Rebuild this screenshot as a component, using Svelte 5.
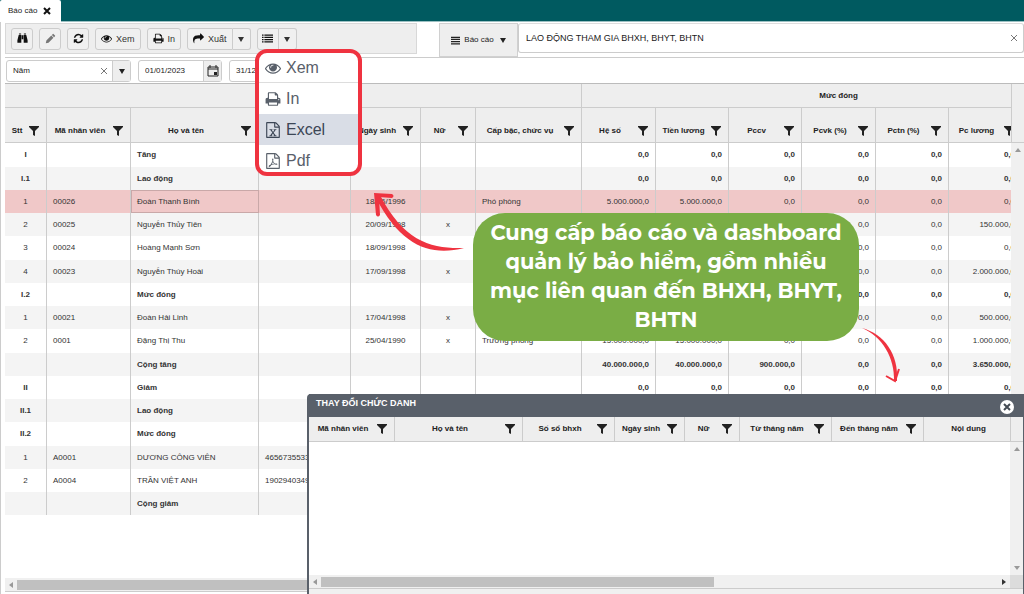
<script lang="ts">
	type Row = { kind?: 'group' | 'selected'; cells: string[] };

	const columns = [
		{ label: 'Stt', width: 42, align: 'center' },
		{ label: 'Mã nhân viên', width: 84, align: 'left' },
		{ label: 'Họ và tên', width: 128, align: 'left' },
		{ label: '', width: 92, align: 'left' },
		{ label: 'Ngày sinh', width: 70, align: 'center' },
		{ label: 'Nữ', width: 55, align: 'center' },
		{ label: 'Cấp bậc, chức vụ', width: 106, align: 'left' },
		{ label: 'Hệ số', width: 74, align: 'right' },
		{ label: 'Tiền lương', width: 73, align: 'right' },
		{ label: 'Pccv', width: 73, align: 'right' },
		{ label: 'Pcvk (%)', width: 74, align: 'right' },
		{ label: 'Pctn (%)', width: 73, align: 'right' },
		{ label: 'Pc lương', width: 73, align: 'right' },
		{ label: '', width: 74, align: 'right' }
	];
	const totalWidth = columns.reduce((sum, c) => sum + c.width, 0);

	const zeros = ['0,0', '0,0', '0,0', '0,0', '0,0', '0,0'];

	const rows: Row[] = [
		{ kind: 'group', cells: ['I', '', 'Tăng', '', '', '', '', ...zeros] },
		{ kind: 'group', cells: ['I.1', '', 'Lao động', '', '', '', '', ...zeros] },
		{ kind: 'selected', cells: ['1', '00026', 'Đoàn Thanh Bình', '', '18/06/1996', '', 'Phó phòng', '5.000.000,0', '5.000.000,0', '0,0', '0,0', '0,0', '0,0'] },
		{ cells: ['2', '00025', 'Nguyễn Thủy Tiên', '', '20/09/1998', 'x', '', '', '', '', '0,0', '0,0', '150.000,0'] },
		{ cells: ['3', '00024', 'Hoàng Mạnh Sơn', '', '18/09/1998', '', '', '', '', '', '0,0', '0,0', '0,0'] },
		{ cells: ['4', '00023', 'Nguyễn Thúy Hoài', '', '17/09/1998', 'x', '', '', '', '', '0,0', '0,0', '2.000.000,0'] },
		{ kind: 'group', cells: ['I.2', '', 'Mức đóng', '', '', '', '', '', '', '', '0,0', '0,0', '0,0'] },
		{ cells: ['1', '00021', 'Đoàn Hải Linh', '', '17/04/1998', 'x', '', '', '', '', '0,0', '0,0', '500.000,0'] },
		{ cells: ['2', '0001', 'Đặng Thị Thu', '', '25/04/1990', 'x', 'Trưởng phòng', '15.000.000,0', '15.000.000,0', '0,0', '0,0', '0,0', '1.000.000,0'] },
		{ kind: 'group', cells: ['', '', 'Cộng tăng', '', '', '', '', '40.000.000,0', '40.000.000,0', '900.000,0', '0,0', '0,0', '3.650.000,0'] },
		{ kind: 'group', cells: ['II', '', 'Giảm', '', '', '', '', ...zeros] },
		{ kind: 'group', cells: ['II.1', '', 'Lao động'] },
		{ kind: 'group', cells: ['II.2', '', 'Mức đóng'] },
		{ cells: ['1', 'A0001', 'DƯƠNG CÔNG VIÊN', '4656735533'] },
		{ cells: ['2', 'A0004', 'TRẦN VIỆT ANH', '1902940349'] },
		{ kind: 'group', cells: ['', '', 'Cộng giảm'] }
	];

	const dialogColumns = [
		{ label: 'Mã nhân viên', width: 86, filter: true },
		{ label: 'Họ và tên', width: 128, filter: true },
		{ label: 'Số sổ bhxh', width: 92, filter: true },
		{ label: 'Ngày sinh', width: 70, filter: true },
		{ label: 'Nữ', width: 55, filter: true },
		{ label: 'Từ tháng năm', width: 92, filter: true },
		{ label: 'Đến tháng năm', width: 92, filter: true },
		{ label: 'Nội dung', width: 90, filter: false }
	];
	const dialogWidth = dialogColumns.reduce((sum, c) => sum + c.width, 0);

	// Icon paths on a 1792 unit grid
	const icons = {
		eye: 'M1664 960q-152-236-381-353 61 104 61 225 0 185-131.5 316.5t-316.5 131.5-316.5-131.5-131.5-316.5q0-121 61-225-229 117-381 353 133 205 333.5 326.5t434.5 121.5 434.5-121.5 333.5-326.5zm-720-384q0-20-14-34t-34-14q-125 0-214.5 89.5t-89.5 214.5q0 20 14 34t34 14 34-14 14-34q0-86 61-147t147-61q20 0 34-14t14-34zm848 384q0 34-20 69-140 230-376.5 368.5t-499.5 138.5-499.5-139-376.5-368q-20-35-20-69t20-69q140-229 376.5-368t499.5-139 499.5 139 376.5 368q20 35 20 69z',
		print: 'M448 1536h896v-256h-896v256zm0-640h896v-384h-160q-40 0-68-28t-28-68v-160h-640v640zm1152 64q0-26-19-45t-45-19-45 19-19 45 19 45 45 19 45-19 19-45zm128 0v416q0 13-9.5 22.5t-22.5 9.5h-224v160q0 40-28 68t-68 28h-960q-40 0-68-28t-28-68v-160h-224q-13 0-22.5-9.5t-9.5-22.5v-416q0-79 56.5-135.5t135.5-56.5h64v-544q0-40 28-68t68-28h672q40 0 88 20t76 48l152 152q28 28 48 76t20 88v256h64q79 0 135.5 56.5t56.5 135.5z',
		file: 'M1596 380q28 28 48 76t20 88v1152q0 40-28 68t-68 28h-1344q-40 0-68-28t-28-68v-1600q0-40 28-68t68-28h896q40 0 88 20t76 48zm-444-244v376h376q-10-29-22-41l-313-313q-12-12-41-22zm384 1528v-1024h-416q-40 0-68-28t-28-68v-416h-768v1536h1280z',
		refresh: 'M1639 1056q0 5-1 7-64 268-268 434.5t-478 166.5q-146 0-282.5-55t-243.5-157l-129 129q-19 19-45 19t-45-19-19-45v-448q0-26 19-45t45-19h448q26 0 45 19t19 45-19 45l-137 137q71 66 161 102t187 36q134 0 250-65t186-179q11-17 53-117 8-23 30-23h192q13 0 22.5 9.5t9.5 22.5zm25-800v448q0 26-19 45t-45 19h-448q-26 0-45-19t-19-45 19-45l138-138q-148-137-349-137-134 0-250 65t-186 179q-11 17-53 117-8 23-30 23h-199q-13 0-22.5-9.5t-9.5-22.5v-7q65-268 270-434.5t480-166.5q146 0 284 55.5t245 156.5l130-129q19-19 45-19t45 19 19 45z',
		share: 'M1792 640q0 26-19 45l-512 512q-19 19-45 19t-45-19-19-45v-256h-224q-98 0-175.5 6t-154 21.5-133 42.5-105.5 69.5-80 101-48.5 138.5-17.5 181q0 55 5 123 0 6 2.5 23.5t2.5 26.5q0 15-8.5 25t-23.5 10q-16 0-28-17-7-9-13-22t-13.5-30-10.5-24q-127-285-127-451 0-199 53-333 162-403 875-403h224v-256q0-26 19-45t45-19 45 19l512 512q19 19 19 45z',
		binoculars: 'M320 64h352v192H320zM1120 64h352v192h-352zM280 320h424v1280H64v-420zM1088 320h424l216 860v420h-640zM768 384h256v640H768z',
		pencil: 'M128 1664l96-448 800-800 352 352-800 800zM1120 320l160-160q48-48 96 0l256 256q48 48 0 96l-160 160z',
		list: 'M0 224h256v224H0zM384 224h1408v224H384zM0 592h256v224H0zM384 592h1408v224H384zM0 960h256v224H0zM384 960h1408v224H384zM0 1328h256v224H0zM384 1328h1408v224H384z',
		bars: 'M0 128h1792v256H0zM0 560h1792v256H0zM0 992h1792v256H0zM0 1424h1792v256H0z',
		excel: 'M500 800h330v90h-70l140 225 140-225h-75v-90h310v90h-80l-225 300 240 320h85v90H950v-90h85l-145-235-145 235h80v90H480v-90h90l245-330-225-290h-90z',
		pdf: 'M430 1540c-60-60 40-170 210-240 110-180 170-330 190-420-60-170-40-260 40-260 90 0 90 130 40 270 50 140 120 230 210 300 160-20 290 10 280 80-10 80-150 70-300-10-130 20-270 50-380 90-120 170-220 260-290 190zm460-540c-40 100-80 180-130 260 90-30 170-50 260-65-60-55-100-120-130-195z'
	};
	type IconName = keyof typeof icons;

	const menuItems: { label: string; icon: IconName[]; active?: boolean }[] = [
		{ label: 'Xem', icon: ['eye'] },
		{ label: 'In', icon: ['print'] },
		{ label: 'Excel', icon: ['file', 'excel'], active: true },
		{ label: 'Pdf', icon: ['file', 'pdf'] }
	];

	let period = $state('Năm');
	let fromDate = $state('01/01/2023');
	let toDate = $state('31/12/2023');
	let reportName = $state('LAO ĐỘNG THAM GIA BHXH, BHYT, BHTN');
</script>

{#snippet icon(names: IconName[])}
	<svg class="icon" viewBox="0 0 1792 1792" aria-hidden="true">
		{#each names as name}<path d={icons[name]} />{/each}
	</svg>
{/snippet}

{#snippet caret()}
	<svg class="caret" viewBox="0 0 6 6" aria-hidden="true"><path d="M0 1h6l-3 5z" /></svg>
{/snippet}

{#snippet funnel()}
	<svg class="funnel" viewBox="0 0 10 10" aria-hidden="true"><path d="M0 0h10v1L6 5v5L4 9V5L0 1z" /></svg>
{/snippet}

{#snippet cross()}
	<svg class="cross" viewBox="0 0 8 8" aria-hidden="true"><path d="M1 1l6 6M7 1l-6 6" /></svg>
{/snippet}

{#snippet calendar()}
	<svg class="calendar" viewBox="0 0 12 12" aria-hidden="true">
		<path d="M1 2h10v9H1zM1 4h10M3 0v3M9 0v3" />
		<rect x="7" y="7" width="3" height="3" />
	</svg>
{/snippet}

<div class="app">
	<header class="tabs">
		<div class="tab">
			<span>Báo cáo</span>
			<button class="bare strong" aria-label="Đóng">{@render cross()}</button>
		</div>
	</header>

	<div class="page">
		<div class="top">
			<div class="toolbar">
				<button class="btn square" aria-label="Tìm">{@render icon(['binoculars'])}</button>
				<button class="btn square muted" aria-label="Sửa">{@render icon(['pencil'])}</button>
				<button class="btn square" aria-label="Nạp lại">{@render icon(['refresh'])}</button>
				<button class="btn">{@render icon(['eye'])}Xem</button>
				<button class="btn">{@render icon(['print'])}In</button>
				<div class="split">
					<button class="btn">{@render icon(['share'])}Xuất</button>
					<button class="btn drop" aria-label="Mở xuất">{@render caret()}</button>
				</div>
				<div class="split">
					<button class="btn square" aria-label="Danh sách">{@render icon(['list'])}</button>
					<button class="btn drop" aria-label="Mở danh sách">{@render caret()}</button>
				</div>
			</div>
			<button class="report">{@render icon(['bars'])}Báo cáo{@render caret()}</button>
			<div class="search">
				<input aria-label="Tên báo cáo" bind:value={reportName} />
				<button class="bare" aria-label="Xóa tên" onclick={() => (reportName = '')}>{@render cross()}</button>
			</div>
		</div>

		<div class="filters">
			<div class="field period">
				<input aria-label="Kỳ" bind:value={period} />
				<button class="bare" aria-label="Xóa kỳ" onclick={() => (period = '')}>{@render cross()}</button>
				<button class="addon" aria-label="Chọn kỳ">{@render caret()}</button>
			</div>
			<div class="field date">
				<input aria-label="Từ ngày" bind:value={fromDate} />
				<button class="addon" aria-label="Chọn từ ngày">{@render calendar()}</button>
			</div>
			<div class="field date">
				<input aria-label="Đến ngày" bind:value={toDate} />
				<button class="addon" aria-label="Chọn đến ngày">{@render calendar()}</button>
			</div>
		</div>

		<div class="grid">
			<div class="viewport">
				<table style="width: {totalWidth}px">
					<colgroup>
						{#each columns as column}<col style="width: {column.width}px" />{/each}
					</colgroup>
					<thead>
						<tr class="bands">
							<th colspan="7"></th>
							<th colspan="7">Mức đóng</th>
						</tr>
						<tr class="heads">
							{#each columns as column}
								<th><div class="head"><span>{column.label}</span>{@render funnel()}</div></th>
							{/each}
						</tr>
					</thead>
					<tbody>
						{#each rows as row}
							<tr class={row.kind}>
								{#each columns as column, i}
									<td class={column.align}>{row.cells[i] ?? ''}</td>
								{/each}
							</tr>
						{/each}
					</tbody>
				</table>
			</div>
			<div class="side">
				<div class="side-head"></div>
				<div class="vtrack"><svg viewBox="0 0 6 4" aria-hidden="true"><path d="M0 4l3-4 3 4z" /></svg></div>
			</div>
			<div class="htrack">
				<svg viewBox="0 0 4 6" aria-hidden="true"><path d="M4 0L0 3l4 3z" /></svg>
				<div class="thumb wide"></div>
			</div>
		</div>
	</div>

	<section class="dialog" aria-label="THAY ĐỔI CHỨC DANH">
		<header>
			<h2>THAY ĐỔI CHỨC DANH</h2>
			<button class="close" aria-label="Đóng cửa sổ">{@render cross()}</button>
		</header>
		<div class="grid">
			<div class="viewport">
				<table style="width: {dialogWidth}px">
					<colgroup>
						{#each dialogColumns as column}<col style="width: {column.width}px" />{/each}
					</colgroup>
					<thead>
						<tr>
							{#each dialogColumns as column}
								<th>
									<div class="head" class:plain={!column.filter}>
										<span>{column.label}</span>{#if column.filter}{@render funnel()}{/if}
									</div>
								</th>
							{/each}
						</tr>
					</thead>
				</table>
			</div>
			<div class="side">
				<div class="side-head"></div>
				<div class="vtrack">
					<svg viewBox="0 0 6 4" aria-hidden="true"><path d="M0 4l3-4 3 4z" /></svg>
					<svg viewBox="0 0 6 4" aria-hidden="true"><path d="M0 0h6L3 4z" /></svg>
				</div>
			</div>
			<div class="htrack">
				<svg viewBox="0 0 4 6" aria-hidden="true"><path d="M4 0L0 3l4 3z" /></svg>
				<div class="lane"><div class="thumb"></div></div>
				<svg class="dark" viewBox="0 0 4 6" aria-hidden="true"><path d="M0 0l4 3-4 3z" /></svg>
			</div>
			<div class="corner"></div>
		</div>
	</section>

	<ul class="menu">
		{#each menuItems as item}
			<li><button class:active={item.active}>{@render icon(item.icon)}{item.label}</button></li>
		{/each}
	</ul>

	<p class="callout">Cung cấp báo cáo và dashboard quản lý bảo hiểm, gồm nhiều mục liên quan đến BHXH, BHYT, BHTN</p>

	<svg class="arrow first" viewBox="0 0 94 60" aria-hidden="true">
		<path d="M92 56C60 64 30 56 4 6L8 3C32 50 60 57 92 56z" />
		<path d="M2 1L20 2Q23 4 20 6L7 5 8 23Q6 26 4 23z" />
	</svg>
	<svg class="arrow second" viewBox="0 0 40 58" aria-hidden="true">
		<path d="M0 0C22 6 37 26 35 53L32 53C33 30 20 8 0 0z" />
		<path d="M24 48L33 53 37 41" />
	</svg>
</div>

<style>
	:global(body) {
		margin: 0;
		background: #fff;
	}

	.app {
		position: relative;
		display: flex;
		flex-direction: column;
		min-height: 100vh;
		overflow: hidden;
		font: 8px/12px 'Liberation Sans', Arial, sans-serif;
		color: #222;
	}

	.app * {
		box-sizing: border-box;
	}

	button,
	input {
		margin: 0;
		padding: 0;
		border: 0;
		background: none;
		font: inherit;
		color: inherit;
	}

	input {
		flex: 1;
		min-width: 0;
		outline: none;
	}

	svg {
		display: block;
		flex: none;
		fill: currentColor;
	}

	.icon {
		width: 12px;
		height: 12px;
	}

	.caret {
		width: 6px;
		height: 6px;
	}

	.funnel {
		width: 10px;
		height: 10px;
	}

	.cross {
		width: 8px;
		height: 8px;
		fill: none;
		stroke: currentColor;
		stroke-width: 1;
	}

	/* Tab strip */
	.tabs {
		display: flex;
		height: 22px;
		background: #005a60;
		border-bottom: 1px solid #9cc0c2;
	}

	.tab {
		display: flex;
		align-items: center;
		gap: 6px;
		height: 22px;
		padding: 0 10px 0 8px;
		background: #fff;
		border-radius: 2px 2px 0 0;
	}

	.bare {
		display: flex;
		color: #777;
	}

	.strong {
		color: #111;
	}

	.strong .cross {
		stroke-width: 2;
	}

	.page {
		flex: 1;
		display: flex;
		flex-direction: column;
		padding: 1px 0 2px 4px;
		border-left: 1px solid #ccc;
	}

	/* Toolbar */
	.top {
		display: flex;
		align-items: flex-start;
		height: 34px;
	}

	.toolbar {
		flex: 0 0 412px;
		display: flex;
		align-items: center;
		gap: 6px;
		height: 31px;
		margin-right: 22px;
		padding: 0 5px;
		background: #eee;
		border: 1px solid #d8d8d8;
	}

	.btn {
		display: flex;
		align-items: center;
		gap: 4px;
		height: 22px;
		padding: 0 5px;
		background: #f0f0f0;
		border: 1px solid #ccc;
		border-radius: 3px;
		font-size: 9px;
		color: #333;
	}

	.btn .icon {
		width: 11px;
		height: 11px;
		color: #111;
	}

	.square {
		justify-content: center;
		width: 22px;
		padding: 0;
	}

	.muted .icon {
		color: #777;
	}

	.split {
		display: flex;
	}

	.split .btn:first-child {
		border-radius: 3px 0 0 3px;
	}

	.drop {
		justify-content: center;
		width: 18px;
		padding: 0;
		border-left: 0;
		border-radius: 0 3px 3px 0;
	}

	.report {
		flex: 0 0 79px;
		display: flex;
		align-items: center;
		justify-content: center;
		gap: 4px;
		height: 34px;
		background: #eee;
		border: 1px solid #d0d0d0;
	}

	.report .icon {
		width: 9px;
		height: 9px;
	}

	.report .caret {
		margin-left: 2px;
	}

	.search {
		flex: 1;
		display: flex;
		align-items: center;
		height: 30px;
		padding: 0 5px 0 7px;
		border: 1px solid #ccc;
		border-top-color: #ddd;
		border-radius: 3px;
		font-size: 9px;
	}

	/* Filter strip */
	.filters {
		display: flex;
		align-items: center;
		gap: 7px;
		height: 27px;
		padding-left: 1px;
		border-top: 1px solid #ccc;
		border-bottom: 1px solid #bbb;
	}

	.field {
		display: flex;
		align-items: stretch;
		height: 22px;
		padding-left: 6px;
		border: 1px solid #ccc;
		border-radius: 3px;
	}

	.field .bare {
		align-items: center;
		padding: 0 4px;
	}

	.period {
		width: 125px;
	}

	.date {
		width: 84px;
	}

	.addon {
		display: flex;
		align-items: center;
		justify-content: center;
		width: 18px;
		background: #eee;
		border-left: 1px solid #ccc;
	}

	.calendar {
		width: 12px;
		height: 12px;
		fill: none;
		stroke: #222;
		stroke-width: 1;
	}

	.calendar rect {
		fill: #222;
		stroke: none;
	}

	/* Data grid */
	.grid {
		flex: 1;
		display: grid;
		grid-template-columns: minmax(0, 1fr) 13px;
		grid-template-rows: 1fr 13px;
		border-bottom: 1px solid #ccc;
	}

	.viewport {
		overflow: hidden;
	}

	table {
		table-layout: fixed;
		border-collapse: separate;
		border-spacing: 0;
	}

	th,
	td {
		padding: 0;
		border-right: 1px solid #ccc;
		white-space: nowrap;
		overflow: hidden;
	}

	th {
		height: 25px;
		background: #eee;
		border-bottom: 1px solid #ccc;
		font-weight: bold;
	}

	.bands th {
		height: 24px;
	}

	.heads th {
		height: 35px;
		padding-top: 12px;
	}

	.head {
		display: flex;
		align-items: center;
		padding-right: 7px;
	}

	.plain {
		padding-right: 0;
	}

	.head span {
		flex: 1;
		text-align: center;
	}

	td {
		height: 23px;
		padding: 0 6px;
		color: #333;
	}

	/* Every fourth row takes the spare pixel */
	tr:nth-child(4n + 1) td {
		height: 24px;
	}

	tbody tr:nth-child(even) td {
		background: #f4f4f4;
	}

	.group td {
		font-weight: bold;
	}

	tbody tr.selected td {
		background: #f0c8c8;
	}

	.selected td:nth-child(3) {
		outline: 1px solid #c9a8a8;
		outline-offset: -1px;
	}

	.center {
		text-align: center;
	}

	.left {
		text-align: left;
	}

	.right {
		text-align: right;
	}

	.side {
		display: flex;
		flex-direction: column;
	}

	.side-head {
		height: 59px;
		background: #eee;
		border-left: 1px solid #ccc;
		border-bottom: 1px solid #ccc;
	}

	.vtrack {
		flex: 1;
		display: flex;
		flex-direction: column;
		justify-content: space-between;
		align-items: center;
		padding: 5px 0;
		background: #f0f0f0;
		color: #999;
	}

	.vtrack svg {
		width: 6px;
		height: 4px;
	}

	.htrack {
		display: flex;
		align-items: center;
		gap: 4px;
		padding: 0 4px;
		background: #f0f0f0;
		color: #999;
	}

	.htrack svg {
		width: 4px;
		height: 6px;
	}

	.htrack .dark {
		color: #333;
	}

	.lane {
		flex: 1;
	}

	.thumb {
		width: 58%;
		height: 10px;
		background: #c0c0c0;
	}

	.wide {
		width: 80%;
	}

	.corner {
		background: #dcdcdc;
	}

	/* Window over the grid */
	.dialog {
		position: absolute;
		top: 394px;
		right: 0;
		bottom: 0;
		left: 307px;
		display: flex;
		flex-direction: column;
		padding-bottom: 5px;
		background: #f0f0f0;
		border: 1px solid #59606a;
		border-width: 0 1px 0 2px;
		border-radius: 4px 0 0 0;
	}

	.dialog header {
		display: flex;
		align-items: flex-start;
		justify-content: space-between;
		height: 23px;
		padding: 3px 9px 0 7px;
		background: #59606a;
	}

	h2 {
		margin: 0;
		font-size: 9px;
		line-height: 13px;
		color: #fff;
	}

	.close {
		display: flex;
		align-items: center;
		justify-content: center;
		width: 14px;
		height: 14px;
		margin-top: 3px;
		background: #fff;
		border-radius: 50%;
		color: #444b54;
	}

	.close .cross {
		stroke-width: 2;
	}

	.dialog .viewport {
		background: #fff;
	}

	.dialog .side-head {
		height: 25px;
	}

	/* Export menu */
	.menu {
		position: absolute;
		top: 49px;
		left: 255px;
		width: 107px;
		height: 127px;
		margin: 0;
		padding: 0;
		overflow: hidden;
		list-style: none;
		background: #fff;
		border: 4px solid #ef3340;
		border-radius: 12px;
	}

	.menu button {
		display: flex;
		align-items: center;
		gap: 5px;
		width: 100%;
		height: 31px;
		padding-left: 6px;
		font-size: 16px;
		line-height: 20px;
		color: #59606a;
	}

	.menu li:first-child button {
		height: 30px;
		border-bottom: 1px solid #ddd;
	}

	.menu .icon {
		width: 16px;
		height: 16px;
	}

	.menu .active {
		background: #d9dde6;
		color: #3c4656;
	}

	/* Annotations */
	.callout {
		position: absolute;
		top: 213px;
		left: 473px;
		width: 386px;
		height: 128px;
		margin: 0;
		padding: 5px 10px;
		background: #7aad45;
		border-radius: 32px;
		font: bold 21px/29px Montserrat, Inter, sans-serif;
		color: #fff;
		text-align: center;
	}

	.arrow {
		position: absolute;
		fill: #ef3340;
	}

	.first {
		top: 192px;
		left: 372px;
		width: 94px;
		height: 60px;
	}

	.second {
		top: 328px;
		left: 862px;
		width: 40px;
		height: 58px;
	}

	.second path:last-child {
		fill: none;
		stroke: #ef3340;
		stroke-width: 2;
	}
</style>
